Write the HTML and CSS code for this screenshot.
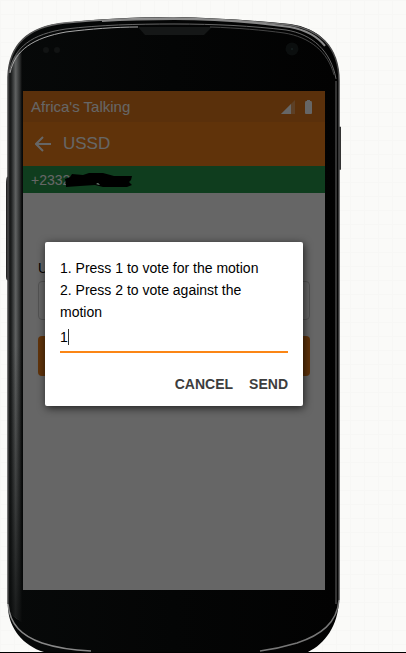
FILE: index.html
```html
<!DOCTYPE html>
<html lang="en">
<head>
<meta charset="utf-8">
<meta name="viewport" content="width=device-width, initial-scale=1">
<title>USSD</title>
<link rel="stylesheet" href="styles.css">
</head>
<body>
<main class="stage">
  <div class="phone">
    <svg class="shell" viewBox="0 0 336 638" preserveAspectRatio="none" aria-hidden="true">
      <defs>
        <linearGradient id="body" x1="0" x2="1" y1="0" y2="0">
          <stop offset="0" stop-color="#070909"/>
          <stop offset="0.5" stop-color="#040505"/>
          <stop offset="1" stop-color="#020202"/>
        </linearGradient>
        <linearGradient id="side" x1="0" x2="1" y1="0" y2="0">
          <stop offset="0" stop-color="#222"/>
          <stop offset="0.2" stop-color="#181a1a"/>
          <stop offset="0.55" stop-color="#606262"/>
          <stop offset="0.85" stop-color="#2b2d2d"/>
          <stop offset="1" stop-color="#080909"/>
        </linearGradient>
        <linearGradient id="fade" x1="0" x2="0" y1="0" y2="1">
          <stop offset="0" stop-color="#070909" stop-opacity="0"/>
          <stop offset="0.55" stop-color="#070909" stop-opacity="0.4"/>
          <stop offset="1" stop-color="#070909" stop-opacity="0.8"/>
        </linearGradient>
        <linearGradient id="rim" x1="0" x2="1" y1="0" y2="0">
          <stop offset="0" stop-color="#444"/>
          <stop offset="0.2" stop-color="#777"/>
          <stop offset="0.5" stop-color="#aaa"/>
          <stop offset="0.8" stop-color="#777"/>
          <stop offset="1" stop-color="#444"/>
        </linearGradient>
      </defs>
      <path d="M2 162H1Q0 164 0 170V262Q0 266 2 266Z" fill="#222"/>
      <path d="M333 112H335V155H333Z" fill="#333"/>
      <path d="M2 62C3 30 22 11 58 8C91 4 130 2 168 2C209 3 247 5 284 9C312 13 333 30 333 66V586C332 612 319 630 302 638H38C17 632 3 614 2 594Z" fill="url(#body)"/>
      <path d="M2 62C3 50 8 41 16 34V608C7 603 2 598 2 590Z" fill="url(#side)"/>
      <path d="M2 330H16V608C7 603 2 598 2 590Z" fill="url(#fade)"/>
      <path d="M132 12H206L198 20H139Z" fill="#151717"/>
      <path d="M2 590V62C3 30 22 12 58 8C91 5 130 3 168 3C209 4 247 6 284 10C312 14 333 31 333 66V586" fill="none" stroke="url(#rim)" stroke-width="1.500"/>
      <path d="M96 6C130 4 150 4 168 4C209 4 247 7 284 12C300 15 312 22 319 31" fill="none" stroke="#8a8a8a" stroke-width="2"/>
      <path d="M3 58C8 32 26 19 60 14C94 10 130 9 168 9C210 9 246 11 280 15C306 19 325 36 330 64" fill="none" stroke="#666" stroke-width="1"/>
      <path d="M4 58C9 35 27 23 60 17C84 14 110 12 132 12" fill="none" stroke="#aaa" stroke-width="1"/>
      <path d="M204 12C232 13 256 15 278 18C304 22 322 37 328 60" fill="none" stroke="#444" stroke-width="1"/>
      <path d="M2 590C4 611 16 622 36 629C48 633 63 636 85 637" fill="none" stroke="#888" stroke-width="1.500"/>
      <path d="M333 586C331 609 315 621 291 629C281 632 269 635 254 637" fill="none" stroke="#777" stroke-width="1.500"/>
      <path d="M330 66V590" stroke="#333" stroke-width="2"/>
      <circle cx="40" cy="35" r="3" fill="#111313"/>
      <circle cx="51" cy="35" r="3" fill="#111313"/>
      <circle cx="286" cy="34" r="6.500" fill="#0b0e0e"/>
      <circle cx="286" cy="34" r="1" fill="#172020"/>
    </svg>
    <section class="screen">
      <header class="status">
        <span>Africa's Talking</span>
        <svg class="status-icons" viewBox="0 0 32 14" aria-hidden="true">
          <path d="M0 14L14 0V14Z" fill="#fff" opacity="0.3"/>
          <path d="M0 14L10 4V14Z" fill="#fff"/>
          <path d="M26 0H29V1H30Q31 1 31 3V13Q31 14 30 14H25Q24 14 24 13V3Q24 1 25 1H26Z" fill="#fff"/>
        </svg>
      </header>
      <nav class="toolbar">
        <button class="back" type="button" aria-label="Back">
          <svg viewBox="0 0 16 16" aria-hidden="true"><path d="M16 8H1.500M8 1L1 8L8 15" fill="none" stroke="#fff" stroke-width="2"/></svg>
        </button>
        <h1 class="title">USSD</h1>
      </nav>
      <div class="account">
        <span>+2332</span>
        <svg class="redaction" viewBox="0 0 70 16" aria-hidden="true"><path d="M1 13L0 7L5 5L7 2L18 3L24 1L38 1L49 4L67 4L66 8L64 10L67 13L62 15H38L30 13L15 14L1 15Z" fill="#000"/><path d="M33 11L31 12L35 13Z" fill="#7e9285"/></svg>
      </div>
      <form class="form">
        <label class="label" for="code">U</label>
        <input class="code" id="code" type="text">
        <button class="dial" type="button" aria-label="Dial"></button>
      </form>
      <div class="overlay">
        <form class="dialog" role="dialog" aria-label="USSD menu">
          <label class="message" for="reply">1. Press 1 to vote for the motion<br>2. Press 2 to vote against the motion</label>
          <div class="field">
            <input class="reply" id="reply" type="text" value="1">
            <span class="caret"></span>
          </div>
          <div class="actions">
            <button class="action" type="button">CANCEL</button>
            <button class="action" type="button">SEND</button>
          </div>
        </form>
      </div>
    </section>
  </div>
</main>
</body>
</html>
```
FILE: styles.css
```css
* {
  box-sizing: border-box;
}

body {
  margin: 0;
  font-family: "Liberation Sans", Arial, sans-serif;
  color: #000;
  background-color: #fafaf8;
  background-image:
    linear-gradient(#f7f7f5 1px, transparent 1px),
    linear-gradient(90deg, #f7f7f5 1px, transparent 1px);
  background-size: 14px 14px;
}

button,
input {
  margin: 0;
  font: inherit;
}

.stage {
  display: flex;
  min-height: 100vh;
  padding: 15px 64px 0 6px;
  border-bottom: 1px solid #000;
}

.phone {
  position: relative;
  display: flex;
  flex: 1;
  max-width: 420px;
  padding: 76px 17px 62px;
}

.shell {
  position: absolute;
  inset: 0;
  width: 100%;
  height: 100%;
}

.screen {
  position: relative;
  flex: 1;
  background: #fff;
}

.status {
  display: flex;
  align-items: center;
  justify-content: space-between;
  height: 31px;
  padding: 0 12px 0 8px;
  color: #fff;
  background: #e0781c;
  font-size: 15px;
}

.status-icons {
  width: 32px;
  height: 14px;
}

.toolbar {
  display: flex;
  align-items: center;
  gap: 12px;
  height: 44px;
  padding: 0 12px;
  color: #fff;
  background: #f08019;
}

.back {
  width: 16px;
  height: 16px;
  padding: 0;
  border: 0;
  background: none;
}

.back svg {
  display: block;
}

.title {
  margin: 0;
  font-size: 17px;
  font-weight: 400;
}

.account {
  display: flex;
  align-items: center;
  height: 27px;
  padding: 0 8px;
  color: #fff;
  background: #26994d;
  font-size: 14px;
}

.redaction {
  z-index: 1;
  width: 70px;
  height: 16px;
  margin-left: -5px;
}

.form {
  display: flex;
  flex-direction: column;
  padding: 66px 15px;
}

.label {
  margin-bottom: 4px;
  font-size: 14px;
  line-height: 18px;
}

.code {
  width: 100%;
  height: 39px;
  border: 1px solid #ccc;
  border-radius: 4px;
  background: #fff;
}

.dial {
  height: 40px;
  margin-top: 16px;
  border: 0;
  border-radius: 4px;
  background: #f08019;
}

.overlay {
  position: absolute;
  inset: 0;
  padding: 151px 22px 0;
  background: rgb(0 0 0 / 60%);
}

.dialog {
  padding: 15px 15px 11px;
  border-radius: 2px;
  background: #fff;
  box-shadow: 1px 2px 8px rgb(0 0 0 / 70%);
  font-size: 14px;
}

.message {
  display: block;
  padding-right: 16px;
  line-height: 22px;
}

.field {
  position: relative;
}

.reply {
  display: block;
  width: 100%;
  height: 30px;
  padding: 0;
  border: 0;
  border-bottom: 2px solid #fb8615;
  outline: 0;
  background: #fff;
}

.caret {
  position: absolute;
  top: 6px;
  left: 8px;
  width: 1px;
  height: 16px;
  background: #333;
}

.actions {
  display: flex;
  justify-content: flex-end;
  gap: 16px;
  padding-top: 20px;
}

.action {
  padding: 0;
  border: 0;
  color: #3d3d3d;
  background: none;
  font-weight: 700;
  line-height: 22px;
}
```
